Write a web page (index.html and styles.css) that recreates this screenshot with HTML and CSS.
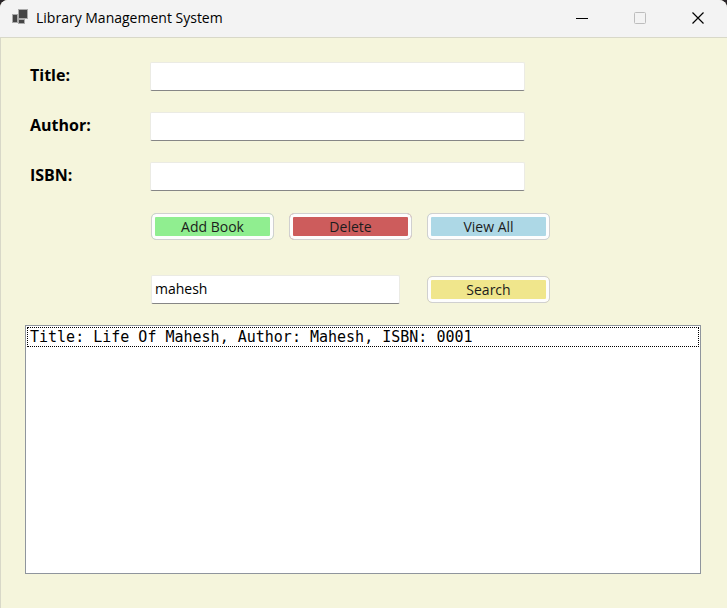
FILE: index.html
```html
<!DOCTYPE html>
<html lang="en">
<head>
<meta charset="utf-8">
<title>Library Management System</title>
<link rel="stylesheet" href="styles.css">
</head>
<body>
<div class="window">
  <header class="titlebar">
    <svg class="app-icon" width="18" height="18" viewBox="0 0 18 18" aria-hidden="true">
      <g fill="#444" stroke="#aaa" stroke-width="1">
        <rect x="0.5" y="5.500" width="5" height="8"/>
        <rect x="6.500" y="0.500" width="9" height="9"/>
        <rect x="6.500" y="10.500" width="6" height="4"/>
      </g>
    </svg>
    <h1 class="caption">Library Management System</h1>
    <button class="window-button" type="button" aria-label="Minimize">
      <svg width="14" height="14" viewBox="0 0 14 14"><path d="M1 7.500H13" stroke="#000"/></svg>
    </button>
    <button class="window-button" type="button" aria-label="Maximize" disabled>
      <svg width="14" height="14" viewBox="0 0 14 14"><rect x="1.500" y="1.500" width="11" height="11" rx="1" fill="none" stroke="#bdbdbd"/></svg>
    </button>
    <button class="window-button" type="button" aria-label="Close">
      <svg width="14" height="14" viewBox="0 0 14 14"><path d="M1.500 1.500L12.500 12.500M12.500 1.500L1.500 12.500" stroke="#000" stroke-width="1.200"/></svg>
    </button>
  </header>
  <main class="client">
    <form class="fields">
      <label class="label" for="title">Title:</label>
      <input class="textbox" id="title" type="text">
      <label class="label" for="author">Author:</label>
      <input class="textbox" id="author" type="text">
      <label class="label" for="isbn">ISBN:</label>
      <input class="textbox" id="isbn" type="text">
    </form>
    <div class="actions">
      <button class="button add" type="button">Add Book</button>
      <button class="button delete" type="button">Delete</button>
      <button class="button view" type="button">View All</button>
      <input class="textbox search-box" type="text" value="mahesh" aria-label="Search books">
      <button class="button search" type="button">Search</button>
    </div>
    <ul class="list">
      <li class="item">Title: Life Of Mahesh, Author: Mahesh, ISBN: 0001</li>
    </ul>
  </main>
</div>
</body>
</html>
```
FILE: styles.css
```css
* {
  box-sizing: border-box;
}

body {
  margin: 0;
  background: #2a2529;
  color: #000;
  font-family: "Open Sans", "Noto Sans", sans-serif;
  font-size: 14px;
}

.window {
  display: flex;
  flex-direction: column;
  min-height: 100vh;
  overflow: hidden;
  border-radius: 8px 8px 0 0;
  background: #f5f5dc;
}

.titlebar {
  display: flex;
  align-items: center;
  height: 38px;
  padding: 0 0 2px 12px;
  border-bottom: 1px solid #d8d8c8;
  background: #f3f3f3;
}

.app-icon {
  margin-right: 6px;
}

.caption {
  flex: 1;
  margin: 0;
  font-size: 14px;
  font-weight: 400;
  line-height: 20px;
}

.window-button {
  display: flex;
  align-items: center;
  justify-content: center;
  width: 58px;
  height: 34px;
  padding: 0;
  border: 0;
  background: none;
}

.client {
  display: flex;
  flex: 1;
  flex-direction: column;
  padding: 24px 26px 34px 24px;
  border-left: 1px solid #d8d8c8;
}

.fields {
  display: grid;
  grid-template-columns: 120px minmax(0, 375px);
  row-gap: 21px;
  padding-left: 5px;
}

.label {
  font-size: 16px;
  font-weight: 700;
  line-height: 26px;
}

.textbox {
  min-width: 0;
  height: 29px;
  padding: 0 3px 2px;
  border: 1px solid #ebebe4;
  border-bottom: 1px solid #868686;
  border-radius: 2px;
  background: #fff;
  color: #000;
  font: inherit;
  outline: 0;
}

.actions {
  display: grid;
  grid-template-columns: repeat(3, minmax(0, 123px));
  align-items: center;
  gap: 35px 15px;
  margin: 22px 0 21px 126px;
}

.button {
  height: 27px;
  padding: 0;
  border: 1px solid #d0d0d0;
  border-radius: 5px;
  box-shadow: inset 0 0 0 3px #fdfdfd;
  color: #1c1c1c;
  font: inherit;
  line-height: 20px;
}

.add {
  background: #90ee90;
}

.delete {
  background: #cd5c5c;
}

.view {
  background: #add8e6;
}

.search {
  background: #f0e68c;
}

.search-box {
  grid-column: span 2;
  width: 100%;
  max-width: 249px;
}

.list {
  flex: 1;
  margin: 0;
  padding: 1px;
  border: 1px solid #8f959d;
  background: #fff;
  list-style: none;
}

.item {
  padding-left: 2px;
  border: 1px dotted #000;
  font-family: "DejaVu Sans Mono", monospace;
  font-size: 15px;
  line-height: 18px;
}
```
